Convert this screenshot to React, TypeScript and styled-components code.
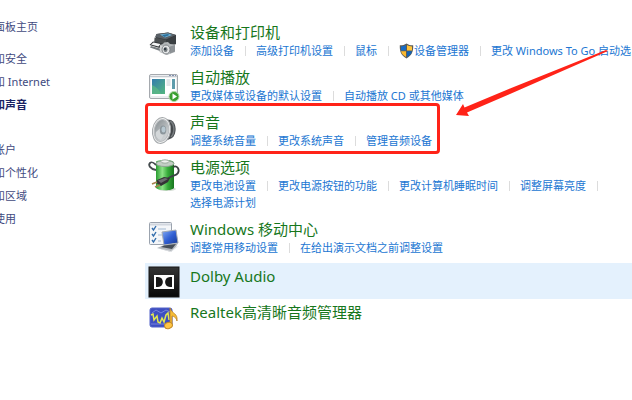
import React from "react";
import styled, { createGlobalStyle } from "styled-components";

const GlobalStyle = createGlobalStyle`
  *, *::before, *::after { box-sizing: border-box; }
  body {
    margin: 0;
    background: #fff;
    overflow: hidden;
    font-family: "Noto Sans", "Noto Sans CJK SC", sans-serif;
  }
`;

const Page = styled.div`
  position: relative;
  display: flex;
  min-height: 100vh;
  overflow: hidden;
`;

const Sidebar = styled.nav`
  flex: 0 0 145px;
  padding-top: 15px;
  overflow: hidden;
`;

const NavGroup = styled.div<{ $gap?: number }>`
  display: flex;
  flex-direction: column;
  align-items: flex-start;
  margin-left: -6px;
  padding-top: ${(p) => p.$gap ?? 0}px;
`;

const NavLink = styled.a<{ $active?: boolean }>`
  color: ${(p) => (p.$active ? "#1a2263" : "#414a80")};
  font-size: 11px;
  font-weight: ${(p) => (p.$active ? 700 : 400)};
  line-height: 23px;
  white-space: nowrap;
  text-decoration: none;
`;

const Main = styled.main`
  flex: 1;
  min-width: 0;
  padding-top: 19px;
`;

const Apps = styled.div`
  padding-top: 2px;
`;

const Row = styled.section<{ $app?: boolean; $selected?: boolean; $fit?: boolean }>`
  position: relative;
  display: flex;
  gap: 10px;
  width: ${(p) => (p.$fit ? "fit-content" : "auto")};
  padding: ${(p) => (p.$app ? "3px 0 1px 3px" : "3px 0 5px 3px")};
  background: ${(p) => (p.$selected ? "#e4f1fd" : "transparent")};
`;

const IconBox = styled.div<{ $app?: boolean }>`
  flex: 0 0 32px;
  height: 32px;
  margin-top: ${(p) => (p.$app ? 0 : 3)}px;
  svg { display: block; overflow: visible; }
`;

const Body = styled.div`
  min-width: 0;
`;

const Title = styled.a`
  display: block;
  color: #17771c;
  font-size: 15px;
  line-height: 20px;
  white-space: nowrap;
  text-decoration: none;
`;

const Links = styled.div`
  display: flex;
  align-items: center;
  height: 17px;
`;

const TaskLink = styled.a`
  display: flex;
  align-items: center;
  flex: none;
  color: #2176d2;
  font-size: 11px;
  line-height: 17px;
  white-space: nowrap;
  text-decoration: none;
`;

const Separator = styled.span`
  flex: 0 0 1px;
  height: 10px;
  margin: 0 10px 0 11px;
  background: #dcdcdc;
`;

const Highlight = styled.div`
  position: absolute;
  inset: -6px -8px 0 0;
  border: 3px solid #ff2318;
  border-radius: 4px;
  pointer-events: none;
`;

const Arrow = styled.svg`
  position: absolute;
  top: 48px;
  left: 455px;
  pointer-events: none;
`;

const Shield = () => (
  <svg width="15" height="16" viewBox="0 0 15 16" aria-hidden="true">
    <path d="M7.500.5C5.500 2 3 2.400.8 2.300.5 8.500 2.300 12.800 7.500 15.400 12.700 12.800 14.500 8.500 14.200 2.300 12 2.400 9.500 2 7.500.5Z" fill="#5b5c58" />
    <path d="M7 2C5.400 3 3.700 3.400 2 3.400V7.500H7Z" fill="#176bc4" />
    <path d="M8 2C9.600 3 11.300 3.400 13 3.400V7.500H8Z" fill="#ffc33a" />
    <path d="M2 8.300H7V14C4.200 12.600 2.600 10.800 2 8.300Z" fill="#fab82e" />
    <path d="M13 8.300H8V14C10.800 12.600 12.400 10.800 13 8.300Z" fill="#1262b5" />
  </svg>
);

const PrinterIcon = () => (
  <svg width="32" height="32" viewBox="0 0 32 32" aria-hidden="true">
    <path d="M8.500 9 20 7.500 28 10 27.500 18 18 24 6 20Z" fill="#34383b" />
    <path d="M8.500 9 20 7.500 28 10 18 14.500 7 12Z" fill="#596066" />
    <path d="M12 9.500 20 8.500 24 10 17 12.500Z" fill="#75b8dc" />
    <path d="M14 10 20 9 21.500 10 16.500 12Z" fill="#2b6f9b" />
    <path d="M6.500 12.500 18 15V24L6 20.500Z" fill="#4b4f51" />
    <path d="M18 15 28 10.500V19L18 24.500Z" fill="#3a3f42" />
    <path d="M5 16.500 14 18.500 11.500 23 1.500 20Z" fill="#303437" />
    <path d="M5.500 17.500 12.500 19 10.500 21.500 3 19.600Z" fill="#f3f4f4" />
    <path d="M3 21 12 23.500V26L2 22.500Z" fill="#777d80" />
    <path d="M12 20 15 19 16 17.500 20 17 22 19 27 19.500V27L19 30 11.500 27Z" fill="#b4b8ba" />
    <path d="M12 20.500 20 22V29L12 26.500Z" fill="#d2d4d5" />
    <path d="M22 21.500 27 20V26.500L22 28.500Z" fill="#8d9296" />
    <ellipse cx="18" cy="24.500" rx="4" ry="4.500" fill="#e3e5e6" stroke="#7b8084" />
    <ellipse cx="17.500" cy="24.500" rx="2" ry="2.600" fill="#72787c" />
    <circle cx="17" cy="24" r="1" fill="#202b35" />
  </svg>
);

const AutoPlayIcon = () => (
  <svg width="32" height="32" viewBox="0 0 32 32" aria-hidden="true">
    <defs>
      <linearGradient id="autoplayPane" x2="1" y2="1">
        <stop stopColor="#347cae" />
        <stop offset="1" stopColor="#54b780" />
      </linearGradient>
    </defs>
    <rect x="1.500" y="4.500" width="28" height="24" rx="1.500" fill="#eceef0" stroke="#a5a9ae" />
    <path d="M2 6.500H29" stroke="#c6cad0" />
    <path d="M21 5.500h2m1 0h2m1 0h1" stroke="#8190b0" />
    <rect x="3" y="8" width="25" height="18" fill="#fff" />
    <rect x="4" y="9" width="13" height="15" fill="url(#autoplayPane)" />
    <path d="M4 24V15C8 17 11 19 13 24Z" fill="#5fbc83" opacity=".7" />
    <rect x="18.500" y="9" width="4" height="7" fill="#e2e6e9" />
    <rect x="24" y="9" width="3" height="10" fill="#5e9cac" />
    <circle cx="26" cy="26.500" r="5" fill="#3a9f30" stroke="#b2d7a8" />
    <path d="M24.500 23.500 29 26.500 24.500 29.500Z" fill="#fff" />
  </svg>
);

const SpeakerIcon = () => (
  <svg width="32" height="32" viewBox="0 0 32 32" aria-hidden="true">
    <defs>
      <linearGradient id="speakerCone" x2="1" y2="1">
        <stop stopColor="#848b8f" />
        <stop offset="1" stopColor="#e0e3e4" />
      </linearGradient>
    </defs>
    <path d="M15 4 23 5C29 8 29 19 24 23L15 27Z" fill="#464a4d" />
    <path d="M22 6C27 9 27 18 23 22" fill="none" stroke="#777c7f" strokeWidth="1.500" />
    <ellipse cx="13.500" cy="15.500" rx="9" ry="13" transform="rotate(8 13.500 15.500)" fill="#eeefef" stroke="#a2a6a9" />
    <ellipse cx="13.500" cy="15.500" rx="7.300" ry="11" transform="rotate(8 13.500 15.500)" fill="url(#speakerCone)" stroke="#b9bdc0" />
    <path d="M8 17 15 11 18 16 13 25C9 24 7 21 8 17Z" fill="#d3d7d9" />
    <ellipse cx="15" cy="15" rx="3.200" ry="4.500" fill="#8c969c" />
    <ellipse cx="15.500" cy="14.500" rx="2" ry="3" fill="#b8c8d1" />
  </svg>
);

const PowerIcon = () => (
  <svg width="32" height="32" viewBox="0 0 32 32" aria-hidden="true">
    <defs>
      <linearGradient id="battery">
        <stop stopColor="#299c31" />
        <stop offset=".35" stopColor="#8ce386" />
        <stop offset=".65" stopColor="#37ad3b" />
        <stop offset="1" stopColor="#17741e" />
      </linearGradient>
    </defs>
    <ellipse cx="19" cy="29" rx="9" ry="2" fill="#d5ddd5" />
    <path d="M8 7V2C8 .5 13 0 17 0 22 0 26 1 26 3V28C24 31 11 31 8 28Z" fill="url(#battery)" />
    <ellipse cx="17" cy="3.500" rx="9" ry="3" fill="#c2cec4" stroke="#8da592" />
    <ellipse cx="17" cy="1.500" rx="4" ry="1.700" fill="#eef3ee" stroke="#9caa9e" />
    <path d="M8 10C2 9 0 5 2 3 4 1 6 3 8 5" fill="none" stroke="#444b4d" strokeWidth="1.800" />
    <path d="M25 7C29 5 32 9 30 13 28 17 23 14 19 20" fill="none" stroke="#3b4244" strokeWidth="1.800" />
    <path d="M9 20 16 17 22 18 20 22 13 26 8 23Z" fill="#343336" />
    <path d="M10 20.500 17 18 20 19 13 23Z" fill="#6c6c70" />
    <path d="M9 22 4 24M12 25 7 27" stroke="#a6804e" strokeWidth="1.800" />
  </svg>
);

const MobilityIcon = () => (
  <svg width="32" height="32" viewBox="0 0 32 32" aria-hidden="true">
    <defs>
      <linearGradient id="laptop" x2="1" y2="1">
        <stop stopColor="#86aef5" />
        <stop offset=".5" stopColor="#315fd3" />
        <stop offset="1" stopColor="#163790" />
      </linearGradient>
    </defs>
    <rect x="1.500" y=".5" width="22" height="22" rx="1" fill="#f4f6f9" stroke="#9ba3ae" />
    <path d="M2 2.500H23" stroke="#d1d6de" strokeWidth="2" />
    <path d="m4 6 1.500 2L8 4m-4 8 1.500 2L8 10m-4 8 1.500 2L8 16" fill="none" stroke="#326dad" strokeWidth="1.400" />
    <path d="M10 7h8M10 13h4M10 19h3" stroke="#a3bad3" />
    <path d="M14 10 28 8 30 21 16 23Z" fill="url(#laptop)" stroke="#a4abb5" />
    <path d="M16 23 30 21 28 25 23 30 9 26Z" fill="#b4b8bd" />
    <path d="M16 23.500 28 22 24 27 13 25Z" fill="#464e58" />
    <path d="M9 26 23 29 28 25 31 24 23 30Z" fill="#e3e6e9" />
  </svg>
);

const DolbyIcon = () => (
  <svg width="32" height="32" viewBox="0 0 32 32" aria-hidden="true">
    <defs>
      <linearGradient id="dolby" x2="0" y2="1">
        <stop stopColor="#353535" />
        <stop offset="1" stopColor="#080808" />
      </linearGradient>
    </defs>
    <rect x="1" y="1" width="30" height="30" fill="url(#dolby)" stroke="#171717" />
    <rect x="6" y="9" width="20" height="14" fill="#fff" />
    <path d="M8 11H10C16.500 11 16.500 21 10 21H8ZM24 11H22C15.500 11 15.500 21 22 21H24Z" fill="#171717" />
  </svg>
);

const RealtekIcon = () => (
  <svg width="32" height="32" viewBox="0 0 32 32" aria-hidden="true">
    <rect x="2" y="6" width="22" height="19" rx="2" fill="#3e4fc1" stroke="#5263c8" />
    <path d="M4 11 8 8 13 11 18 8 22 10M3 22H22" fill="none" stroke="#7683dd" />
    <path d="M3 13 5 12 6 18 9 14 10 20 12 21 14 16 16 20 18 13 20 11 21 18" fill="none" stroke="#e3e94e" strokeWidth="1.500" />
    <path d="M22 22V6C24 12 30 11 29 19 28 15 25 14 24 14V22" fill="#f7bd36" stroke="#b77f22" strokeWidth=".8" />
    <ellipse cx="20.500" cy="23.500" rx="4" ry="3" transform="rotate(-15 20.500 23.500)" fill="#ffc544" stroke="#c48b25" />
  </svg>
);

type Task = { label: string; shield?: boolean };
type Category = {
  title: string;
  icon: React.ReactNode;
  lines: Task[][];
  highlighted?: boolean;
};

const categories: Category[] = [
  {
    title: "设备和打印机",
    icon: <PrinterIcon />,
    lines: [[
      { label: "添加设备" },
      { label: "高级打印机设置" },
      { label: "鼠标" },
      { label: "设备管理器", shield: true },
      { label: "更改 Windows To Go 启动选" },
    ]],
  },
  {
    title: "自动播放",
    icon: <AutoPlayIcon />,
    lines: [[{ label: "更改媒体或设备的默认设置" }, { label: "自动播放 CD 或其他媒体" }]],
  },
  {
    title: "声音",
    icon: <SpeakerIcon />,
    highlighted: true,
    lines: [[{ label: "调整系统音量" }, { label: "更改系统声音" }, { label: "管理音频设备" }]],
  },
  {
    title: "电源选项",
    icon: <PowerIcon />,
    lines: [
      [
        { label: "更改电池设置" },
        { label: "更改电源按钮的功能" },
        { label: "更改计算机睡眠时间" },
        { label: "调整屏幕亮度" },
      ],
      [{ label: "选择电源计划" }],
    ],
  },
  {
    title: "Windows 移动中心",
    icon: <MobilityIcon />,
    lines: [[{ label: "调整常用移动设置" }, { label: "在给出演示文档之前调整设置" }]],
  },
];

const CategoryRow = ({ title, icon, lines, highlighted }: Category) => (
  <Row $fit={highlighted}>
    <IconBox>{icon}</IconBox>
    <Body>
      <Title href="#">{title}</Title>
      {lines.map((line, n) => (
        <Links key={n}>
          {line.map((task, i) => (
            <React.Fragment key={task.label}>
              <TaskLink href="#">
                {task.shield && <Shield />}
                {task.label}
              </TaskLink>
              {(i < line.length - 1 || n < lines.length - 1) && <Separator />}
            </React.Fragment>
          ))}
        </Links>
      ))}
    </Body>
    {highlighted && <Highlight />}
  </Row>
);

export default function App() {
  return (
    <Page>
      <GlobalStyle />
      <Sidebar>
        <NavGroup>
          <NavLink href="#">面板主页</NavLink>
        </NavGroup>
        <NavGroup $gap={9}>
          <NavLink href="#">和安全</NavLink>
          <NavLink href="#">和 Internet</NavLink>
          <NavLink href="#" $active aria-current="page">和声音</NavLink>
        </NavGroup>
        <NavGroup $gap={22}>
          <NavLink href="#">账户</NavLink>
          <NavLink href="#">和个性化</NavLink>
          <NavLink href="#">和区域</NavLink>
          <NavLink href="#">使用</NavLink>
        </NavGroup>
      </Sidebar>
      <Main>
        {categories.map((c) => (
          <CategoryRow key={c.title} {...c} />
        ))}
        <Apps>
          <Row $app $selected>
            <IconBox $app><DolbyIcon /></IconBox>
            <Body><Title href="#">Dolby Audio</Title></Body>
          </Row>
          <Row $app>
            <IconBox $app><RealtekIcon /></IconBox>
            <Body><Title href="#">Realtek高清晰音频管理器</Title></Body>
          </Row>
        </Apps>
      </Main>
      <Arrow width="154" height="70" viewBox="0 0 154 70" aria-hidden="true">
        <path d="M1 67 8 56 9.500 59.500 55 40.500 151 2 153 3 55 46 12 64.500 14 68Z" fill="#ff2318" />
      </Arrow>
    </Page>
  );
}
